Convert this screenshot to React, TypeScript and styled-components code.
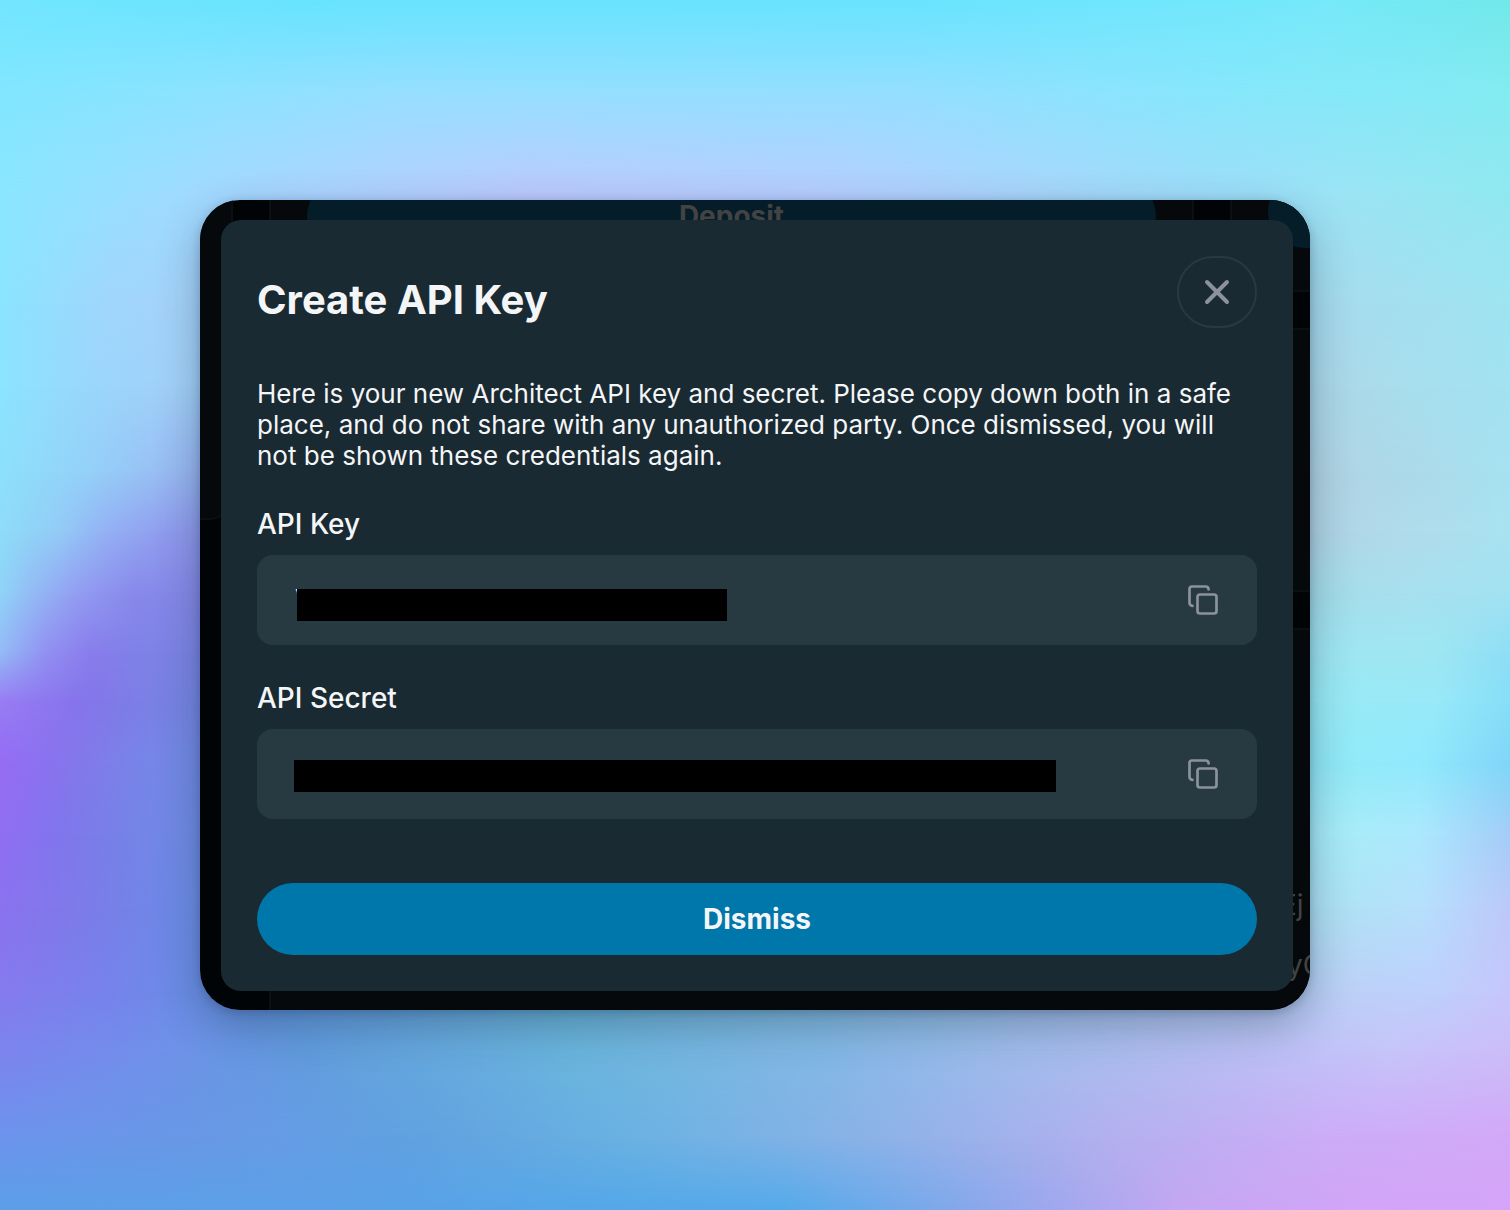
import React from "react";
import styled, { createGlobalStyle } from "styled-components";

const GlobalStyle = createGlobalStyle`
  *, *::before, *::after { box-sizing: border-box; }
  body {
    margin: 0;
    font-family: Inter, "Liberation Sans", sans-serif;
    font-optical-sizing: none;
    -webkit-font-smoothing: antialiased;
  }
  button, input { font: inherit; }
  h1, p { margin: 0; }
`;

/* Each band is a horizontal gradient that fades in from the band above it. */
const bands: { from: number; to: number; colors: string }[] = [
  { from: 0, to: 0, colors: "#72e6fe 0%, #67e4ff 20%, #68e4ff 60%, #76e9fa 88%, #72e8ea 100%" },
  { from: 0, to: 8, colors: "#82e6ff 0%, #98deff 27%, #96deff 60%, #88e6fc 80%, #84ebf2 100%" },
  { from: 8, to: 16, colors: "#8ae6ff 0%, #a4d8ff 15%, #bccafe 35%, #b6ceff 55%, #9fdcfa 78%, #9ae4f4 90%, #90e8f0 100%" },
  { from: 16, to: 25, colors: "#8ae4ff 0%, #a0d6fc 7%, #a6d2fa 13%, #a6d2fa 50%, #a6dcee 89%, #a2e0f0 95%, #9ee4f2 100%" },
  { from: 25, to: 32, colors: "#8be4ff 0%, #9ad6fc 6%, #a2d0f8 12%, #a2d0f8 50%, #acd8e8 88%, #a8deec 93%, #a2e2f2 100%" },
  { from: 32, to: 39, colors: "#8de0fb 0%, #94d0f8 6%, #98c0f4 10%, #98b0f0 14%, #b0d2e2 50%, #b0d4e4 88%, #acdaea 94%, #a6e2f0 100%" },
  { from: 39, to: 44, colors: "#8edcf8 0%, #93caf6 4%, #94b0f4 7%, #8f9cee 11%, #8c96ea 14%, #b0d4e4 87%, #b0dcec 94%, #a8e2f0 100%" },
  { from: 44, to: 49, colors: "#8fd4f8 0%, #93bcf5 2%, #939ef2 5%, #8888ea 9%, #8488e6 14%, #a4dce8 87%, #a8e0ee 93%, #a2e2f2 100%" },
  { from: 49, to: 54, colors: "#94baf6 0%, #9290f2 3%, #887cec 6%, #7e82e6 10%, #7a86e4 14%, #9ee6f2 88%, #9ee6f2 95%, #8edef6 100%" },
  { from: 54, to: 58, colors: "#987cf4 0%, #8674ec 5%, #7a80e4 10%, #7488e4 14%, #98eaf6 88%, #98e9f8 95%, #86def8 100%" },
  { from: 58, to: 63, colors: "#956cf4 0%, #8774ec 4%, #7884e8 9%, #708ce4 14%, #92eaf8 89%, #90eafc 94%, #80d6f8 100%" },
  { from: 63, to: 69, colors: "#906ef2 0%, #8076ec 4%, #7484e6 9%, #6e8ee6 14%, #a8ecf8 89%, #ace8fd 94%, #a4ccf8 100%" },
  { from: 69, to: 75, colors: "#8a72ee 0%, #7e7aea 5%, #6e88e6 11%, #6c90e6 14%, #aee2f4 88%, #b6e0fc 94%, #bcc8fa 100%" },
  { from: 75, to: 82, colors: "#857aee 0%, #7682ec 7%, #6c8ce6 12%, #649ce4 20%, #6cb6da 38%, #86bee4 55%, #a4c2ee 70%, #bcd0f6 89%, #bed0fc 95%, #c6c6fc 100%" },
  { from: 82, to: 87, colors: "#7c84ee 0%, #7090ea 10%, #629cde 20%, #6ab6de 38%, #84b8e6 55%, #a2bcec 68%, #babef4 82%, #c6c4fa 92%, #ccbcf8 100%" },
  { from: 87, to: 94, colors: "#6c94ec 0%, #6898e6 13%, #60a2e0 28%, #6ab2e2 42%, #8cb2e8 58%, #b4b0ee 74%, #ccacf6 88%, #d2a8f8 100%" },
  { from: 94, to: 100, colors: "#5c9ee8 0%, #5ca0e8 20%, #54a6e8 38%, #54aaea 52%, #80a8ea 63%, #c4a6f2 78%, #d2a4f8 90%, #d4a4f8 100%" },
];

const Desktop = styled.div`
  position: relative;
  isolation: isolate;
  min-height: 100vh;
  padding: 200px;
  overflow: hidden;
`;

const Band = styled.div<{ $from: number; $to: number; $colors: string }>`
  position: absolute;
  inset: 0;
  z-index: -1;
  background: linear-gradient(90deg, ${(p) => p.$colors});
  mask-image: ${(p) =>
    p.$to ? `linear-gradient(transparent ${p.$from}%, #000 ${p.$to}%)` : "none"};
`;

const Window = styled.div`
  position: relative;
  padding: 20px 17px 19px 21px;
  border-radius: 40px;
  overflow: hidden;
  background: #000406;
`;

const Shadow = styled.div`
  border-radius: 40px;
  box-shadow: 0 16px 44px rgba(20, 40, 60, 0.32), 0 2px 10px rgba(10, 20, 50, 0.2);
`;

const Page = styled.div`
  position: absolute;
  inset: 0;
  display: flex;
  align-items: flex-start;
  gap: 36px;
  color: #434343;
`;

const Card = styled.div`
  background: #05090c;
  border: 2px solid #0a0f11;
`;

const Sidebar = styled(Card)`
  flex: none;
  width: 33px;
  height: 320px;
  border-width: 0 2px 2px 0;
  border-radius: 0 0 24px 0;
`;

const Content = styled.div`
  flex: 1;
  align-self: stretch;
  display: grid;
  grid-template-columns: 1fr 80px;
  grid-template-rows: 92px 264px 1fr;
  gap: 36px;
`;

const MainCard = styled(Card)`
  grid-row: span 2;
  padding: 0 36px;
  border-top: 0;
`;

const SideCard = styled(Card)<{ $first?: boolean }>`
  padding-left: 36px;
  border-right: 0;
  ${(p) => p.$first && "border-top: 0;"}
`;

const AccountsCard = styled(Card)`
  grid-column: span 2;
  display: flex;
  flex-direction: column;
  align-items: flex-end;
  padding-top: 245px;
  border-width: 2px 0 0 2px;
  font-size: 28px;
  line-height: 60px;
`;

const AccountName = styled.span`
  width: 30px;
  white-space: nowrap;
`;

const PageButton = styled.button<{ $raise: number; $wide?: boolean }>`
  display: block;
  width: ${(p) => (p.$wide ? "200px" : "100%")};
  height: 72px;
  margin-top: ${(p) => -p.$raise}px;
  padding: 0;
  border: 0;
  border-radius: 36px;
  background: #051d29;
  color: inherit;
  font-size: 28px;
  font-weight: 700;
  line-height: 34px;
`;

const Dialog = styled.section`
  position: relative;
  display: flex;
  flex-direction: column;
  padding: 36px;
  border-radius: 20px;
  background: #1a2a32;
  color: #f4f5f7;
`;

const Header = styled.header`
  display: flex;
  align-items: flex-start;
  justify-content: space-between;
`;

const Title = styled.h1`
  padding-top: 20px;
  font-size: 40px;
  font-weight: 700;
  line-height: 48px;
`;

const CloseButton = styled.button`
  display: grid;
  place-items: center;
  width: 80px;
  height: 72px;
  padding: 0;
  border: 2px solid #283a41;
  border-radius: 36px;
  background: transparent;
  color: #8b919d;
  cursor: pointer;
`;

const Message = styled.p`
  margin-top: 50px;
  font-size: 26px;
  line-height: 31px;
`;

const Field = styled.div`
  display: flex;
  flex-direction: column;
  gap: 14px;
  margin-top: 36px;
`;

const Label = styled.label`
  font-size: 28px;
  font-weight: 500;
  line-height: 34px;
`;

const FieldBox = styled.div`
  position: relative;
  display: flex;
  align-items: center;
  height: 90px;
  padding: 0 38px;
  border-radius: 16px;
  background: #283a41;
`;

const Secret = styled.input`
  flex: 1;
  min-width: 0;
  height: 34px;
  padding: 0;
  border: 0;
  outline: 0;
  background: transparent;
  color: #f4f5f7;
  font-size: 28px;
`;

const Redaction = styled.span<{ $left: number; $top: number; $width: number }>`
  position: absolute;
  left: ${(p) => p.$left}px;
  top: ${(p) => p.$top}px;
  width: ${(p) => p.$width}px;
  height: 32px;
  background: #000;
`;

const CopyButton = styled.button`
  display: flex;
  padding: 0;
  border: 0;
  background: transparent;
  color: #8b919d;
  cursor: pointer;
`;

const DismissButton = styled.button`
  height: 72px;
  margin-top: 64px;
  padding: 0;
  border: 0;
  border-radius: 36px;
  background: #0077aa;
  color: #f4f5f7;
  font-size: 28px;
  font-weight: 700;
  cursor: pointer;
`;

const CloseIcon = () => (
  <svg width="26" height="26" viewBox="0 0 26 26" fill="none" stroke="currentColor" strokeWidth="4" strokeLinecap="round" aria-hidden="true">
    <path d="M3 3L23 23M23 3L3 23" />
  </svg>
);

const CopyIcon = () => (
  <svg width="32" height="32" viewBox="0 0 32 32" fill="none" stroke="currentColor" strokeWidth="2.7" strokeLinecap="round" strokeLinejoin="round" aria-hidden="true">
    <rect x="10.5" y="10.5" width="19" height="19" rx="2.5" />
    <path d="M5.5 21.8C3.8 21.6 2.5 20.6 2.5 18.8V5C2.5 3.5 3.5 2.5 5 2.5H18.6C20.4 2.5 21.5 3.5 21.6 5.4" />
  </svg>
);

interface CredentialProps {
  id: string;
  label: string;
  value?: string;
  left: number;
  top: number;
  width: number;
}

const Credential = ({ id, label, value, left, top, width }: CredentialProps) => (
  <Field>
    <Label htmlFor={id}>{label}</Label>
    <FieldBox>
      <Secret id={id} type="text" readOnly value={value ?? ""} />
      <Redaction $left={left} $top={top} $width={width} />
      <CopyButton type="button" aria-label={`Copy ${label}`}>
        <CopyIcon />
      </CopyButton>
    </FieldBox>
  </Field>
);

export default function App() {
  return (
    <>
      <GlobalStyle />
      <Desktop>
        {bands.map((band) => (
          <Band key={band.to} $from={band.from} $to={band.to} $colors={band.colors} />
        ))}
        <Shadow>
          <Window>
            <Page>
              <Sidebar />
              <Content>
                <MainCard>
                  <PageButton type="button" tabIndex={-1} $raise={20}>Deposit</PageButton>
                </MainCard>
                <SideCard $first>
                  <PageButton type="button" tabIndex={-1} $raise={24} $wide aria-label="Account action" />
                </SideCard>
                <SideCard />
                <AccountsCard>
                  <AccountName>Ej</AccountName>
                  <AccountName>lyC</AccountName>
                </AccountsCard>
              </Content>
            </Page>
            <Dialog role="dialog" aria-labelledby="dialog-title">
              <Header>
                <Title id="dialog-title">Create API Key</Title>
                <CloseButton type="button" aria-label="Close">
                  <CloseIcon />
                </CloseButton>
              </Header>
              <Message>
                Here is your new Architect API key and secret. Please copy down both in a safe
                place, and do not share with any unauthorized party. Once dismissed, you will not
                be shown these credentials again.
              </Message>
              <Credential id="api-key" label="API Key" value="V" left={40} top={34} width={430} />
              <Credential id="api-secret" label="API Secret" left={37} top={31} width={762} />
              <DismissButton type="button">Dismiss</DismissButton>
            </Dialog>
          </Window>
        </Shadow>
      </Desktop>
    </>
  );
}
